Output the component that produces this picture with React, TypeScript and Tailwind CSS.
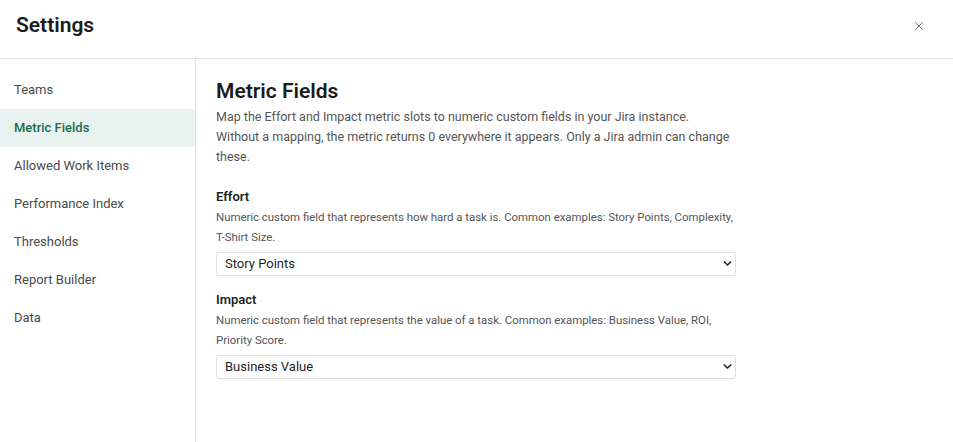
import { X } from "lucide-react"

const NAV = [
  "Teams",
  "Metric Fields",
  "Allowed Work Items",
  "Performance Index",
  "Thresholds",
  "Report Builder",
  "Data",
]

function MetricSelect({ value }: { value: string }) {
  return (
    <div className="relative w-[520px]">
      <select
        defaultValue={value}
        className="h-6 w-full appearance-none rounded-[3px] border border-[#dedede] bg-white pl-2 pr-6 text-[13px] text-[#1f1f1f]"
      >
        <option>{value}</option>
      </select>
      <svg
        viewBox="0 0 10 6"
        className="pointer-events-none absolute right-[4px] top-[10px] h-[5px] w-[9px]"
        fill="none"
        stroke="#222"
        strokeWidth="2"
        strokeLinecap="round"
        strokeLinejoin="round"
      >
        <path d="M1.2 1.2l3.8 3.6 3.8-3.6" />
      </svg>
    </div>
  )
}

function Field({
  label,
  lines,
  value,
}: {
  label: string
  lines: [string, string]
  value: string
}) {
  return (
    <div className="flex flex-col">
      <div className="text-[13px] font-semibold leading-[20px] text-[#1f1f1f]">
        {label}
      </div>
      <p className="whitespace-nowrap text-[11.4px] leading-[20px] text-[#555]">
        {lines[0]}
        <br />
        {lines[1]}
      </p>
      <div className="mt-[4px]">
        <MetricSelect value={value} />
      </div>
    </div>
  )
}

export default function App() {
  return (
    <div className="flex h-[442px] w-[953px] flex-col bg-white font-['Roboto',sans-serif] text-[#1f1f1f]">
      <header className="flex h-[59px] shrink-0 items-center justify-between border-b border-[#e2e2e2] pb-[6px] pl-4 pr-[27px]">
        <h2 className="text-[21px] font-semibold text-[#1c1c1c]">Settings</h2>
        <X className="h-[14px] w-[14px] text-[#666]" strokeWidth={1.6} />
      </header>
      <div className="flex min-h-0 flex-1">
        <nav className="flex w-[196px] shrink-0 flex-col border-r border-[#e2e2e2] pt-[12px]">
          {NAV.map((item) =>
            item === "Metric Fields" ? (
              <div
                key={item}
                className="flex h-[38px] items-center bg-[#e8f2ee] pl-[14px] text-[13px] font-medium text-[#1c6b52]"
              >
                {item}
              </div>
            ) : (
              <div
                key={item}
                className="flex h-[38px] items-center pl-[14px] text-[13px] text-[#4a4a4a]"
              >
                {item}
              </div>
            ),
          )}
        </nav>
        <main className="flex flex-col pl-5 pt-[18px]">
          <h1 className="text-[21px] font-semibold leading-[28px] text-[#1c1c1c]">
            Metric Fields
          </h1>
          <p className="mt-[2px] whitespace-nowrap text-[12.5px] leading-[20px] text-[#555]">
            Map the Effort and Impact metric slots to numeric custom fields in
            your Jira instance.
            <br />
            Without a mapping, the metric returns 0 everywhere it appears. Only
            a Jira admin can change
            <br />
            these.
          </p>
          <div className="mt-[20px] flex flex-col gap-[14px]">
            <Field
              label="Effort"
              lines={[
                "Numeric custom field that represents how hard a task is. Common examples: Story Points, Complexity,",
                "T-Shirt Size.",
              ]}
              value="Story Points"
            />
            <Field
              label="Impact"
              lines={[
                "Numeric custom field that represents the value of a task. Common examples: Business Value, ROI,",
                "Priority Score.",
              ]}
              value="Business Value"
            />
          </div>
        </main>
      </div>
    </div>
  )
}
